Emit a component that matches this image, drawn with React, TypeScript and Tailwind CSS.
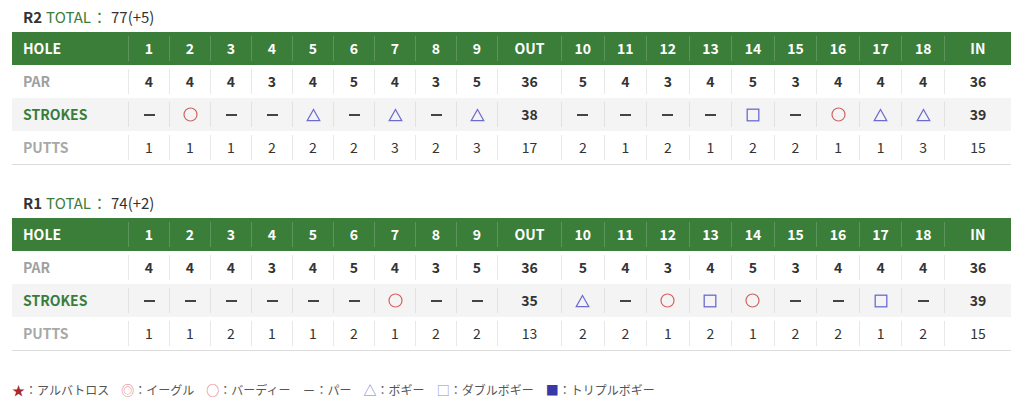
import React from 'react';

type Mark = '-' | 'O' | 'T' | 'S';

interface Round {
  name: string;
  total: string;
  par: number[];
  strokes: Mark[];
  out: number;
  inn: number;
  putts: number[];
}

const PAR = [4, 4, 4, 3, 4, 5, 4, 3, 5, 5, 4, 3, 4, 5, 3, 4, 4, 4];

const ROUNDS: Round[] = [
  {
    name: 'R2',
    total: '77(+5)',
    par: PAR,
    strokes: ['-', 'O', '-', '-', 'T', '-', 'T', '-', 'T', '-', '-', '-', '-', 'S', '-', 'O', 'T', 'T'],
    out: 38,
    inn: 39,
    putts: [1, 1, 1, 2, 2, 2, 3, 2, 3, 2, 1, 2, 1, 2, 2, 1, 1, 3],
  },
  {
    name: 'R1',
    total: '74(+2)',
    par: PAR,
    strokes: ['-', '-', '-', '-', '-', '-', 'O', '-', '-', 'T', '-', 'O', 'S', 'O', '-', '-', 'S', '-'],
    out: 35,
    inn: 39,
    putts: [1, 1, 2, 1, 1, 2, 1, 2, 2, 2, 2, 1, 2, 1, 2, 2, 1, 2],
  },
];

const FONT = { fontFamily: '"Noto Sans CJK JP", "Noto Sans", sans-serif' };
const GRID = 'grid w-[999px] grid-cols-[116px_repeat(9,41px)_64px_repeat(9,42.55px)_67px]';

const Symbol: React.FC<{ mark: Mark }> = ({ mark }) => {
  if (mark === 'O')
    return (
      <svg width="15" height="15" viewBox="0 0 15 15">
        <circle cx="7.5" cy="7.5" r="6.5" fill="none" stroke="#d06262" strokeWidth="1.2" />
      </svg>
    );
  if (mark === 'T')
    return (
      <svg width="15" height="14" viewBox="0 0 15 14">
        <path d="M7.5 1.5 L13.8 12.6 L1.2 12.6 Z" fill="none" stroke="#6b6bd0" strokeWidth="1.2" />
      </svg>
    );
  if (mark === 'S')
    return (
      <svg width="14" height="14" viewBox="0 0 14 14">
        <rect x="1.2" y="1.2" width="11.6" height="11.6" fill="none" stroke="#6b6bd0" strokeWidth="1.3" />
      </svg>
    );
  return <span className="block w-[11px] h-[2px] bg-[#444]" />;
};

const Cell: React.FC<{ children: React.ReactNode; sep?: string; first?: boolean }> = ({ children, sep, first }) => (
  <div className="py-[4px] h-full">
    <div
      className={`h-full flex items-center ${first ? 'justify-start pl-[11px]' : `justify-center border-l ${sep}`}`}
    >
      {children}
    </div>
  </div>
);

const ScoreTable: React.FC<{ round: Round }> = ({ round }) => {
  const header = Array.from({ length: 18 }, (_, i) => i + 1);

  return (
    <div>
      <div className="h-[24px] flex items-center pl-[11px] text-[15px] text-[#333]">
        <span className="font-bold">{round.name}</span>
        <span className="text-[#3a7d3a] ml-[4px]">TOTAL</span>
        <span className="text-[#3a7d3a] ml-[1px] mr-[4px]">：</span>
        <span>{round.total}</span>
      </div>
      <div className="mt-[3px] w-[999px] border-b border-[#dcdcdc]">
        <div className={`${GRID} h-[33px] bg-[#3b7e3a] text-white font-bold text-[14px]`}>
          <Cell first>HOLE</Cell>
          {header.slice(0, 9).map((h, i) => (
            <Cell key={i} sep="border-[#5b955a]">{h}</Cell>
          ))}
          <Cell sep="border-[#5b955a]">OUT</Cell>
          {header.slice(9).map((h, i) => (
            <Cell key={i} sep="border-[#5b955a]">{h}</Cell>
          ))}
          <Cell sep="border-[#5b955a]">IN</Cell>
        </div>
        <div className={`${GRID} h-[33px] bg-white text-[#333] font-bold text-[14px]`}>
          <Cell first><span className="text-[#a0a0a0]">PAR</span></Cell>
          {round.par.slice(0, 9).map((p, i) => (
            <Cell key={i} sep="border-[#e8e8e8]">{p}</Cell>
          ))}
          <Cell sep="border-[#e8e8e8]">36</Cell>
          {round.par.slice(9).map((p, i) => (
            <Cell key={i} sep="border-[#e8e8e8]">{p}</Cell>
          ))}
          <Cell sep="border-[#e8e8e8]">36</Cell>
        </div>
        <div className={`${GRID} h-[33px] bg-[#f4f4f4] text-[#333] font-bold text-[14px]`}>
          <Cell first><span className="text-[#3a7d3a]">STROKES</span></Cell>
          {round.strokes.slice(0, 9).map((m, i) => (
            <Cell key={i} sep="border-[#e2e2e2]"><Symbol mark={m} /></Cell>
          ))}
          <Cell sep="border-[#e2e2e2]">{round.out}</Cell>
          {round.strokes.slice(9).map((m, i) => (
            <Cell key={i} sep="border-[#e2e2e2]"><Symbol mark={m} /></Cell>
          ))}
          <Cell sep="border-[#e2e2e2]">{round.inn}</Cell>
        </div>
        <div className={`${GRID} h-[33px] bg-white text-[#333] text-[14px]`}>
          <Cell first><span className="text-[#a8a8a8] font-bold">PUTTS</span></Cell>
          {round.putts.slice(0, 9).map((p, i) => (
            <Cell key={i} sep="border-[#e8e8e8]">{p}</Cell>
          ))}
          <Cell sep="border-[#e8e8e8]">{round.putts.slice(0, 9).reduce((a, b) => a + b, 0)}</Cell>
          {round.putts.slice(9).map((p, i) => (
            <Cell key={i} sep="border-[#e8e8e8]">{p}</Cell>
          ))}
          <Cell sep="border-[#e8e8e8]">{round.putts.slice(9).reduce((a, b) => a + b, 0)}</Cell>
        </div>
      </div>
    </div>
  );
};

const LEGEND = [
  { sym: '★', color: 'text-[#a52a2a]', label: 'アルバトロス' },
  { sym: '◎', color: 'text-[#e07a7a]', label: 'イーグル' },
  { sym: '○', color: 'text-[#d66a6a]', label: 'バーディー' },
  { sym: '－', color: 'text-[#555]', label: 'パー' },
  { sym: '△', color: 'text-[#7373d2]', label: 'ボギー' },
  { sym: '□', color: 'text-[#8a8ad6]', label: 'ダブルボギー' },
  { sym: '■', color: 'text-[#3838a6]', label: 'トリプルボギー' },
];

export default function App() {
  return (
    <div className="w-[1024px] h-[413px] bg-white pl-[12px] pt-[5px] overflow-hidden" style={FONT}>
      <ScoreTable round={ROUNDS[0]} />
      <div className="h-[26px]" />
      <ScoreTable round={ROUNDS[1]} />
      <div className="mt-[29px] flex items-center gap-[12px] text-[12px] text-[#555] h-[20px]">
        {LEGEND.map((l) => (
          <span key={l.label} className="flex items-center">
            <span className={`${l.color} text-[13px]`}>{l.sym}</span>
            <span>：{l.label}</span>
          </span>
        ))}
      </div>
    </div>
  );
}
